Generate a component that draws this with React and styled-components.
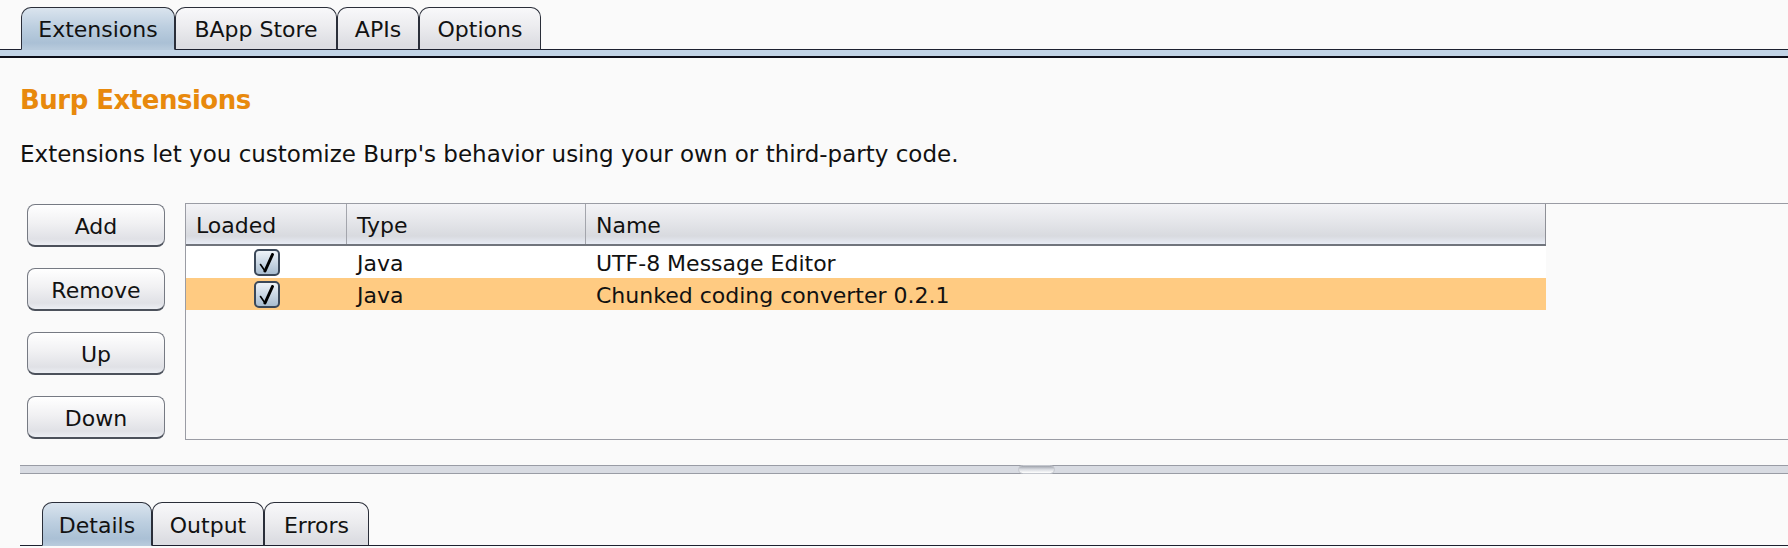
import React from "react";
import styled, { createGlobalStyle } from "styled-components";

const GlobalStyle = createGlobalStyle`
  html, body {
    margin: 0;
    padding: 0;
    background: #fafafa;
    overflow: hidden;
  }
  body {
    font-family: "DejaVu Sans", "Liberation Sans", sans-serif;
    color: #111;
  }
`;

const Page = styled.div`
  width: 1788px;
  height: 548px;
  display: flex;
  flex-direction: column;
  background: #fafafa;
`;

const TabRow = styled.div`
  display: flex;
  align-items: flex-end;
  height: ${props => props.height}px;
  margin-top: ${props => props.top}px;
  margin-left: ${props => props.offset}px;
`;

const TabFiller = styled.div`
  width: ${props => (props.grow ? "auto" : `${props.width}px`)};
  flex: ${props => (props.grow ? 1 : "none")};
  border-bottom: 1px solid #1d2130;
`;

const Tab = styled.div`
  width: ${props => props.width}px;
  height: 100%;
  box-sizing: border-box;
  display: flex;
  align-items: center;
  justify-content: center;
  padding-top: 2px;
  font-size: 22px;
  color: #121212;
  border: 1px solid #2a2e39;
  border-bottom: ${props => (props.active ? "1px solid #b7cadc" : "1px solid #1d2130")};
  border-radius: 10px 10px 0 0;
  background: ${props =>
    props.active
      ? "linear-gradient(#dae4ee, #bdcfe0 45%, #aac0d5 85%, #b7cadc)"
      : "linear-gradient(#f8f8fa, #ececef 45%, #dcdde2 90%)"};
`;

const Band = styled.div`
  height: 6px;
  background: #c1d3e6;
  border-bottom: 2px solid #0c0d18;
`;

const Content = styled.div`
  display: flex;
  flex-direction: column;
  padding-left: 20px;
`;

const Heading = styled.h2`
  margin: 27px 0 0;
  font-size: 26px;
  line-height: 30px;
  letter-spacing: -0.5px;
  font-weight: bold;
  color: #e8890c;
`;

const Description = styled.p`
  margin: 25px 0 0;
  font-size: 23px;
  line-height: 28px;
`;

const Workspace = styled.div`
  display: flex;
  margin-top: 35px;
  padding-left: 27px;
  height: 237px;
`;

const ButtonColumn = styled.div`
  display: flex;
  flex-direction: column;
  gap: 21px;
  padding-top: 1px;
  width: 138px;
`;

const SideButton = styled.button`
  height: 43px;
  box-sizing: border-box;
  font-family: inherit;
  font-size: 22px;
  color: #121212;
  border: 1px solid #767a83;
  border-bottom: 2px solid #4c515b;
  border-radius: 8px;
  background: linear-gradient(#ffffff, #f1f1f3 45%, #e0e1e6 85%, #eceef3);
  padding: 3px 0 0;
`;

const Table = styled.div`
  flex: 1;
  margin-left: 20px;
  display: flex;
  flex-direction: column;
  border: 1px solid #9a9ca4;
  border-right: none;
  background: #fafafa;
`;

const HeaderRow = styled.div`
  display: flex;
  width: 1360px;
  height: 40px;
  border-bottom: 2px solid #71757d;
  background: linear-gradient(#f3f3f6, #e6e7eb 40%, #d8dadf 80%, #e8ecf5);
`;

const HeaderCell = styled.div`
  width: ${props => props.width}px;
  flex: ${props => (props.width ? "none" : 1)};
  box-sizing: border-box;
  display: flex;
  align-items: center;
  padding: 2px 0 0 ${props => props.pad}px;
  font-size: 22px;
  border-right: 1px solid ${props => (props.last ? "#8e9097" : "#a3a5ac")};
`;

const Row = styled.div`
  display: flex;
  width: 1360px;
  height: 32px;
  background: ${props => (props.selected ? "#ffcb82" : "#ffffff")};
`;

const Cell = styled.div`
  width: ${props => props.width}px;
  flex: ${props => (props.width ? "none" : 1)};
  box-sizing: border-box;
  display: flex;
  align-items: center;
  justify-content: ${props => (props.center ? "center" : "flex-start")};
  padding: ${props => (props.center ? 1 : 3)}px 0 0 ${props => props.pad || 0}px;
  font-size: 22px;
`;

const CheckBox = styled.span`
  width: 26px;
  height: 27px;
  box-sizing: border-box;
  display: flex;
  align-items: center;
  justify-content: center;
  border: 2px solid #3b4859;
  border-radius: 5px;
  background: linear-gradient(#eef3f8, #cbd8e5 50%, #a9bdd0);
`;

const Splitter = styled.div`
  display: flex;
  align-items: center;
  margin-top: 25px;
  margin-left: 20px;
  height: 7px;
  background: #d8dbe2;
  border-top: 1px solid #999ca5;
  border-bottom: 1px solid #999ca5;
`;

const Knob = styled.div`
  margin-left: 998px;
  width: 37px;
  height: 9px;
  box-sizing: border-box;
  border-radius: 5px;
  border: 1px solid #c4c7ce;
  background: linear-gradient(#9fa3ac, #d5d8de 45%, #ffffff);
`;

const Check = () => (
  <svg width="18" height="20" viewBox="0 0 18 20">
    <path d="M2.5 11.5 L7 18" stroke="#000" strokeWidth="1.6" strokeLinecap="round" fill="none" />
    <path d="M7 18 L14.5 1.5" stroke="#000" strokeWidth="3" strokeLinecap="round" fill="none" />
  </svg>
);

const topTabs = [
  { label: "Extensions", width: 154, active: true },
  { label: "BApp Store", width: 162 },
  { label: "APIs", width: 82 },
  { label: "Options", width: 122 },
];

const bottomTabs = [
  { label: "Details", width: 110, active: true },
  { label: "Output", width: 112 },
  { label: "Errors", width: 105 },
];

const extensions = [
  { type: "Java", name: "UTF-8 Message Editor" },
  { type: "Java", name: "Chunked coding converter 0.2.1", selected: true },
];

function Tabs({ items, top, height, offset, indent }) {
  return (
    <TabRow top={top} height={height} offset={offset}>
      <TabFiller width={indent} />
      {items.map(t => (
        <Tab key={t.label} width={t.width} active={t.active}>
          {t.label}
        </Tab>
      ))}
      <TabFiller grow />
    </TabRow>
  );
}

export default function App() {
  return (
    <Page>
      <GlobalStyle />
      <Tabs items={topTabs} top={7} height={43} offset={0} indent={21} />
      <Band />

      <Content>
        <Heading>Burp Extensions</Heading>
        <Description>
          Extensions let you customize Burp's behavior using your own or third-party code.
        </Description>
      </Content>

      <Workspace>
        <ButtonColumn>
          {["Add", "Remove", "Up", "Down"].map(b => (
            <SideButton key={b}>{b}</SideButton>
          ))}
        </ButtonColumn>
        <Table>
          <HeaderRow>
            <HeaderCell width={161} pad={10}>Loaded</HeaderCell>
            <HeaderCell width={239} pad={10}>Type</HeaderCell>
            <HeaderCell pad={10} last>Name</HeaderCell>
          </HeaderRow>
          {extensions.map(ext => (
            <Row key={ext.name} selected={ext.selected}>
              <Cell width={161} center>
                <CheckBox>
                  <Check />
                </CheckBox>
              </Cell>
              <Cell width={239} pad={10}>{ext.type}</Cell>
              <Cell pad={10}>{ext.name}</Cell>
            </Row>
          ))}
        </Table>
      </Workspace>

      <Splitter>
        <Knob />
      </Splitter>

      <Tabs items={bottomTabs} top={28} height={44} offset={20} indent={22} />
    </Page>
  );
}
